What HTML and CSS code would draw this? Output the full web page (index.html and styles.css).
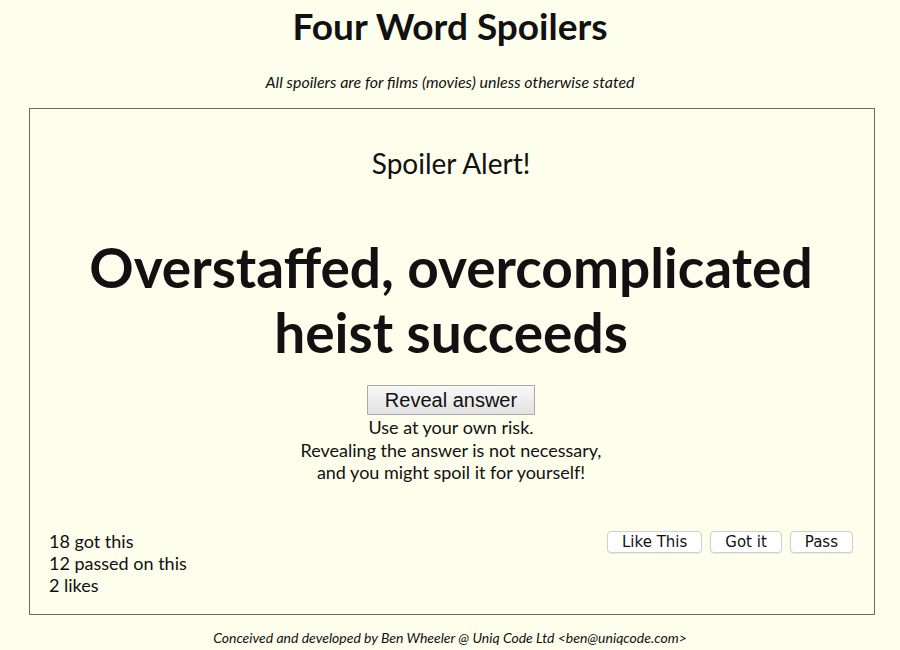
FILE: index.html
```html
<!DOCTYPE html>
<html>
<head>
<meta charset="utf-8">
<title>Four Word Spoilers</title>
<link rel="stylesheet" href="styles.css">
</head>
<body>
<header class="header">
  <h1 class="title">Four Word Spoilers</h1>
  <p class="subtitle">All spoilers are for films (movies) unless otherwise stated</p>
</header>
<main class="card">
  <div class="alert">Spoiler Alert!</div>
  <div class="spoiler">Overstaffed, overcomplicated heist succeeds</div>
  <div class="reveal">
    <button class="reveal-btn">Reveal answer</button>
    <p class="warning">Use at your own risk.<br>Revealing the answer is not necessary,<br>and you might spoil it for yourself!</p>
  </div>
  <div class="bottom">
    <div class="stats">
      <div>18 got this</div>
      <div>12 passed on this</div>
      <div>2 likes</div>
    </div>
    <div class="actions">
      <button class="small-btn">Like This</button>
      <button class="small-btn">Got it</button>
      <button class="small-btn">Pass</button>
    </div>
  </div>
</main>
<footer class="footer">Conceived and developed by Ben Wheeler @ Uniq Code Ltd &lt;ben@uniqcode.com&gt;</footer>
</body>
</html>
```
FILE: styles.css
```css
html, body {
  margin: 0;
  padding: 0;
  background: #fefeed;
}
body {
  font-family: Lato, "Open Sans", sans-serif;
  color: #111;
}
.header {
  text-align: center;
}
.title {
  margin: 0;
  padding-top: 5px;
  font-size: 37px;
  font-weight: 700;
  line-height: 42px;
}
.subtitle {
  margin: 25px 0 0;
  font-style: italic;
  font-size: 16px;
  line-height: 20px;
}
.card {
  margin: 16px 25px 0 29px;
  border: 1px solid #6b6b6b;
  height: 507px;
  box-sizing: border-box;
  display: flex;
  flex-direction: column;
  align-items: center;
  padding: 37px 21px 0 19px;
}
.alert {
  font-size: 28px;
  line-height: 34px;
}
.spoiler {
  margin-top: 55px;
  font-size: 55px;
  font-weight: 700;
  line-height: 65px;
  text-align: center;
  max-width: 780px;
}
.reveal {
  margin-top: 20px;
  text-align: center;
}
.reveal-btn {
  font-family: "Liberation Sans", Arial, sans-serif;
  font-size: 20px;
  height: 30px;
  padding: 0 17px;
  border: 1px solid #a9a9a9;
  border-radius: 1px;
  background: linear-gradient(#f8f8f8, #e2e2e2);
  color: #111;
  display: block;
  margin: 0 auto;
}
.warning {
  margin: 1px 0 0;
  font-size: 18px;
  line-height: 22.5px;
}
.bottom {
  margin-top: 46px;
  width: 100%;
  display: flex;
  justify-content: space-between;
  align-items: flex-start;
}
.stats {
  font-size: 18px;
  line-height: 22px;
}
.actions {
  display: flex;
  gap: 8px;
  margin-top: 1px;
}
.small-btn {
  font-family: "DejaVu Sans", sans-serif;
  font-size: 15px;
  height: 22px;
  padding: 0 14px;
  background: #fff;
  border: 1px solid #cfcfcf;
  border-radius: 4px;
  color: #111;
  box-shadow: 0 1px 1px rgba(0,0,0,0.08);
}
.footer {
  text-align: center;
  font-style: italic;
  font-size: 14px;
  line-height: 18px;
  margin-top: 14px;
}
```
